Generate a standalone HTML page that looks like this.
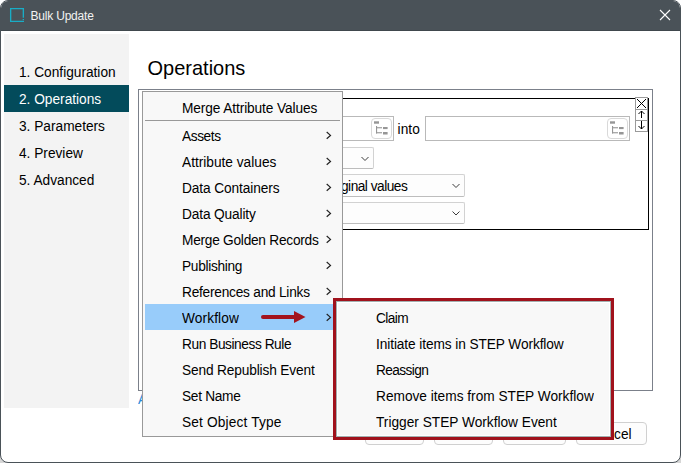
<!DOCTYPE html>
<html><head><meta charset="utf-8">
<style>
*{box-sizing:border-box;margin:0;padding:0}
html,body{width:681px;height:463px;overflow:hidden;background:linear-gradient(#fff 0,#fff 430px,#d6d6d6 431px)}
body{position:relative;font-family:"Liberation Sans",sans-serif;font-size:13.7px;color:#000}
.a{position:absolute}
.t{position:absolute;white-space:pre;line-height:20px;height:20px;transform:scaleY(1.1);transform-origin:0 15px}
#win{left:0;top:0;width:681px;height:463px;border:1px solid #4a5258;border-radius:8px;overflow:hidden;background:#fff}
#title{left:0;top:0;width:681px;height:30px;background:#4a5258}
.nav{left:4px;width:125px;height:27px}
.mi{left:182px}
.chev{position:absolute;left:326px;width:6px;height:9px}
.sub{left:376px}
.btn{position:absolute;top:422px;height:23px;border:1px solid #d0d0d0;border-radius:4px;background:#fdfdfd}
.dd{position:absolute;border:1px solid #d2d2d2;border-bottom-color:#bdbdbd;border-radius:2px;background:#fdfdfd}
.tf{position:absolute;border:1px solid #b9b9b9;background:#fff}
.ib{position:absolute;width:21px;height:21px;border:1px solid #d9d9d9;border-radius:4px;background:#fff}
</style></head><body>
<div id="win" class="a">
  <div id="title" class="a"></div><div class="a" style="left:0;top:29px;width:681px;height:1px;background:#40484d"></div>
</div>
<!-- title icon -->
<svg class="a" style="left:9px;top:7px" width="17" height="17" viewBox="0 0 17 17"><path d="M14.35 10.8V1.65H1.65V14.35H15" stroke="#19adc6" stroke-width="1.35" fill="none"/><rect x="13.65" y="12" width="1.35" height="1.1" fill="#19adc6"/></svg>
<div class="t" style="left:30.5px;top:6px;font-size:12px;color:#f2f2f2;transform:none;letter-spacing:-0.2px">Bulk Update</div>
<svg class="a" style="left:659px;top:9px" width="12" height="12" viewBox="0 0 12 12"><path d="M1 1L11 11M11 1L1 11" stroke="#fff" stroke-width="1.1"/></svg>

<!-- left nav -->
<div class="a" style="left:4px;top:34px;width:125px;height:374px;background:#f3f3f3"></div>
<div class="a" style="left:4px;top:85px;width:125px;height:27px;background:#034b5b"></div>
<div class="t" style="left:19px;top:63px">1. Configuration</div>
<div class="t" style="left:19px;top:90px;color:#fff">2. Operations</div>
<div class="t" style="left:19px;top:117px">3. Parameters</div>
<div class="t" style="left:19px;top:144px">4. Preview</div>
<div class="t" style="left:19px;top:171px">5. Advanced</div>

<!-- heading -->
<div class="t" style="left:147.5px;top:54.5px;font-size:20px;line-height:26px;height:26px;transform:scaleY(1.04);transform-origin:0 20px">Operations</div>

<!-- outer box -->
<div class="a" style="left:138px;top:89px;width:515px;height:302px;border:1px solid #7b808a"></div>
<!-- black box -->
<div class="a" style="left:150px;top:98px;width:499px;height:132px;border:1px solid #000"></div>
<!-- controls -->
<div class="a" style="left:635px;top:97px;width:13px;height:35px;border:1px solid #9a9a9a;background:#fff"></div>
<div class="a" style="left:635px;top:109px;width:13px;height:1px;background:#9a9a9a"></div>
<div class="a" style="left:635px;top:120px;width:13px;height:1px;background:#9a9a9a"></div>
<svg class="a" style="left:636px;top:98px" width="11" height="33" viewBox="0 0 11 33">
 <path d="M1 1L10 10M10 1L1 10" stroke="#000" stroke-width="1"/>
 <path d="M5.5 13V20M2.5 16L5.5 13L8.5 16" stroke="#000" stroke-width="1" fill="none"/>
 <path d="M5.5 23V31M2.5 28L5.5 31L8.5 28" stroke="#000" stroke-width="1" fill="none"/>
</svg>

<!-- text field 1 -->
<div class="tf" style="left:160px;top:116px;width:234px;height:25px"></div>
<div class="ib" style="left:371px;top:118px"></div>
<!-- into -->
<div class="t" style="left:397.5px;top:120px;letter-spacing:0.1px">into</div>
<div class="tf" style="left:425px;top:116px;width:205px;height:25px"></div>
<div class="ib" style="left:607px;top:118px"></div>
<!-- dropdowns -->
<div class="dd" style="left:160px;top:147px;width:214px;height:22px"></div>
<div class="dd" style="left:160px;top:174px;width:305px;height:23px"></div>
<div class="t" style="left:294px;top:177px;letter-spacing:-0.5px">Keep original values</div>
<div class="dd" style="left:160px;top:202px;width:305px;height:22px"></div>
<svg class="a" style="left:0;top:0" width="681" height="463">
 <g fill="#969696">
  <rect x="374" y="121.3" width="5" height="2.4"/><rect x="376" y="126" width="1.1" height="7.5"/><rect x="376" y="127.2" width="6" height="1.1"/><rect x="376" y="132.2" width="6" height="1.1"/><rect x="383" y="127" width="4.6" height="2.1"/><rect x="383" y="132" width="4.6" height="2.5"/>
  <rect x="610" y="121.3" width="5" height="2.4"/><rect x="612" y="126" width="1.1" height="7.5"/><rect x="612" y="127.2" width="6" height="1.1"/><rect x="612" y="132.2" width="6" height="1.1"/><rect x="619" y="127" width="4.6" height="2.1"/><rect x="619" y="132" width="4.6" height="2.5"/>
 </g>
 <g stroke="#3c3c3c" stroke-width="1" fill="none">
  <path d="M361.5 157L365 160.5L368.5 157"/>
  <path d="M452.5 184L456 187.5L459.5 184"/>
  <path d="M452.5 211.5L456 215L459.5 211.5"/>
 </g>
</svg>

<!-- link -->
<div class="t" style="left:138px;top:390px;color:#2a8ad8">Add</div>

<!-- bottom buttons -->
<div class="btn" style="left:365px;width:59px"></div>
<div class="btn" style="left:434px;width:59px"></div>
<div class="btn" style="left:503px;width:63px"></div>
<div class="btn" style="left:576px;width:71px"></div>
<div class="t" style="left:589px;top:425px">Cancel</div>

<!-- main menu -->
<div class="a" style="left:142px;top:91px;width:201px;height:346px;border:1px solid #999;background:#f8f8f8"></div>
<div class="a" style="left:145px;top:120px;width:195px;height:1px;background:#999"></div>
<div class="a" style="left:145px;top:304px;width:195px;height:26px;background:#98ccfa"></div>
<div class="t mi" style="top:99px;letter-spacing:-0.1px">Merge Attribute Values</div>
<div class="t mi" style="top:127px;letter-spacing:-0.4px">Assets</div>
<div class="t mi" style="top:153px">Attribute values</div>
<div class="t mi" style="top:179px;letter-spacing:-0.09px">Data Containers</div>
<div class="t mi" style="top:205px;letter-spacing:-0.13px">Data Quality</div>
<div class="t mi" style="top:231px;letter-spacing:-0.25px">Merge Golden Records</div>
<div class="t mi" style="top:257px;letter-spacing:-0.3px">Publishing</div>
<div class="t mi" style="top:283px;letter-spacing:-0.23px">References and Links</div>
<div class="t mi" style="top:309px;letter-spacing:0.12px">Workflow</div>
<div class="t mi" style="top:335px;letter-spacing:-0.43px">Run Business Rule</div>
<div class="t mi" style="top:361px;letter-spacing:-0.14px">Send Republish Event</div>
<div class="t mi" style="top:387px;letter-spacing:-0.29px">Set Name</div>
<div class="t mi" style="top:413px;letter-spacing:0.16px">Set Object Type</div>
<svg class="a" style="left:0;top:0" width="681" height="463">
 <g stroke="#222" stroke-width="1.2" fill="none">
  <path d="M326.7 132.0L330.5 135.4L326.7 138.8"/>
  <path d="M326.7 158.0L330.5 161.4L326.7 164.8"/>
  <path d="M326.7 184.0L330.5 187.4L326.7 190.8"/>
  <path d="M326.7 210.0L330.5 213.4L326.7 216.8"/>
  <path d="M326.7 236.0L330.5 239.4L326.7 242.8"/>
  <path d="M326.7 262.0L330.5 265.4L326.7 268.8"/>
  <path d="M326.7 288.0L330.5 291.4L326.7 294.8"/>
  <path d="M326.7 314.0L330.5 317.4L326.7 320.8"/>
 </g>
 <path d="M263 317H294" stroke="#a3131d" stroke-width="4" stroke-linecap="round"/>
 <path d="M294 311L305.5 317L294 323Z" fill="#a3131d"/>
</svg>

<!-- submenu -->
<div class="a" style="left:333px;top:298px;width:281px;height:142px;border:3px solid #a0121c"></div>
<div class="a" style="left:336px;top:301px;width:275px;height:136px;border:1px solid #a3b0b0;background:#f8f8f8;box-shadow:inset 0 0 0 1px #fff"></div>
<div class="t sub" style="top:309px;letter-spacing:-0.6px">Claim</div>
<div class="t sub" style="top:335px;letter-spacing:-0.09px">Initiate items in STEP Workflow</div>
<div class="t sub" style="top:361px;letter-spacing:-0.6px">Reassign</div>
<div class="t sub" style="top:387px">Remove items from STEP Workflow</div>
<div class="t sub" style="top:413px">Trigger STEP Workflow Event</div>
</body></html>
